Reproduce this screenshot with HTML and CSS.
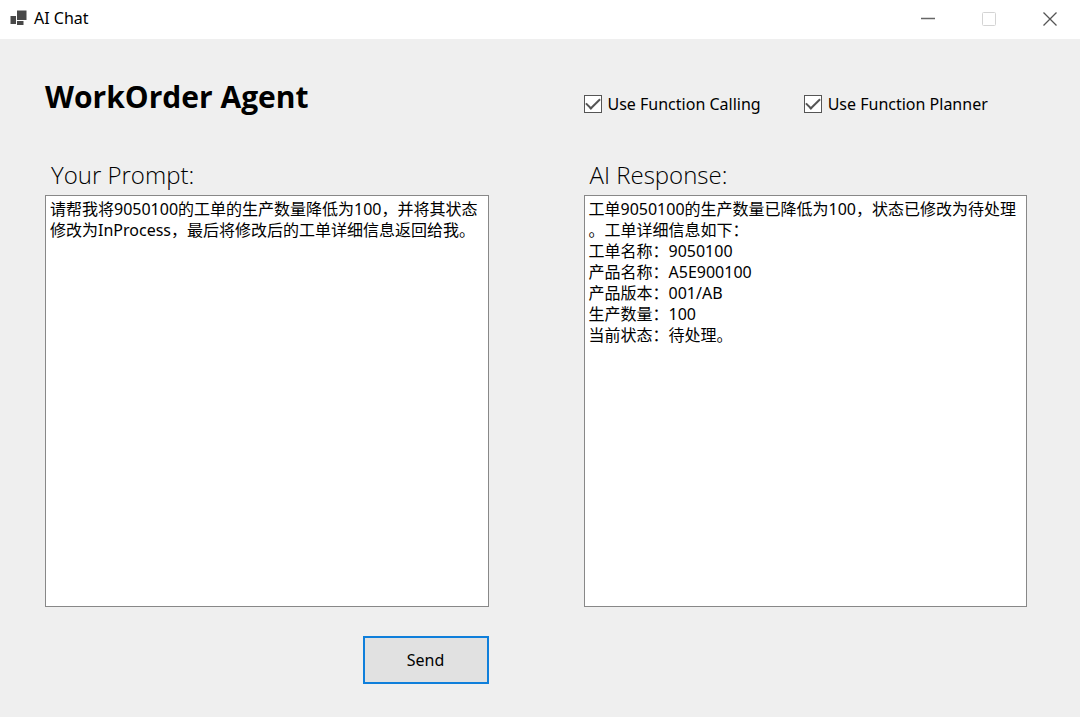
FILE: index.html
```html
<!DOCTYPE html>
<html lang="zh-CN">
<head>
<meta charset="utf-8">
<meta name="viewport" content="width=device-width, initial-scale=1">
<title>AI Chat</title>
<link rel="stylesheet" href="styles.css">
</head>
<body>
<header class="titlebar">
  <svg class="app-icon" width="18" height="18" viewBox="0 0 18 18" aria-hidden="true">
    <path fill="#484848" d="M8 .5h9.5V10H8zM1.5 6H7v8H1.5zM8 11h6.5v4H8z"/>
  </svg>
  <span class="app-name">AI Chat</span>
  <div class="window-controls">
    <button class="window-button" type="button" aria-label="Minimize">
      <svg width="14" height="14" viewBox="0 0 14 14"><path d="M0 6.5h14" stroke="#666" stroke-width="1.5"/></svg>
    </button>
    <button class="window-button" type="button" aria-label="Maximize" disabled>
      <svg width="14" height="14" viewBox="0 0 14 14"><rect x=".5" y=".5" width="13" height="13" rx="1" fill="none" stroke="#d4d4d4"/></svg>
    </button>
    <button class="window-button" type="button" aria-label="Close">
      <svg width="14" height="14" viewBox="0 0 14 14"><path d="M.5.5l13 13M13.5.5l-13 13" stroke="#555" stroke-width="1.3"/></svg>
    </button>
  </div>
</header>
<main class="form">
  <div class="top">
    <h1 class="heading">WorkOrder Agent</h1>
    <div class="options">
      <label class="option"><input class="check" type="checkbox" checked>Use Function Calling</label>
      <label class="option"><input class="check" type="checkbox" checked>Use Function Planner</label>
    </div>
  </div>
  <div class="panels">
    <section class="panel">
      <label class="panel-label" for="prompt">Your Prompt:</label>
      <textarea class="panel-text" id="prompt" spellcheck="false">请帮我将9050100的工单的生产数量降低为100，并将其状态
修改为InProcess，最后将修改后的工单详细信息返回给我。</textarea>
    </section>
    <section class="panel">
      <label class="panel-label" for="response">AI Response:</label>
      <textarea class="panel-text" id="response" spellcheck="false">工单9050100的生产数量已降低为100，状态已修改为待处理
。工单详细信息如下：
工单名称：9050100
产品名称：A5E900100
产品版本：001/AB
生产数量：100
当前状态：待处理。</textarea>
    </section>
  </div>
  <div class="actions">
    <button class="send" type="button">Send</button>
  </div>
</main>
</body>
</html>
```
FILE: styles.css
```css
* {
  box-sizing: border-box;
}

body {
  display: flex;
  flex-direction: column;
  min-height: 100vh;
  margin: 0;
  background: #efefef;
  color: #000;
  font: 16px/21px "Noto Sans", "Noto Sans CJK SC", sans-serif;
}

.titlebar {
  display: flex;
  align-items: center;
  height: 39px;
  padding: 0 0 2px 9px;
  background: #fff;
}

.app-icon {
  margin-right: 7px;
}

.window-controls {
  display: flex;
  align-self: stretch;
  margin-left: auto;
}

.window-button {
  display: grid;
  place-items: center;
  width: 61px;
  padding: 0;
  border: 0;
  background: transparent;
}

.form {
  display: flex;
  flex: 1;
  flex-direction: column;
  padding: 36px 53px 33px 45px;
}

.top,
.panels,
.actions {
  display: grid;
  grid-template-columns: 1fr 1fr;
  column-gap: 95px;
}

.top {
  align-items: center;
  margin-bottom: 38px;
}

.heading {
  margin: 0;
  font-family: "Open Sans", sans-serif;
  font-size: 30px;
  line-height: 44px;
  white-space: nowrap;
}

.options {
  display: flex;
  gap: 43px;
  padding-top: 14px;
}

.option {
  display: flex;
  align-items: center;
  gap: 6px;
  white-space: nowrap;
}

.check {
  display: grid;
  flex: none;
  place-items: center;
  width: 18px;
  height: 18px;
  margin: 0;
  border: 1px solid #555;
  background: #fff;
  appearance: none;
}

.check:checked::before {
  content: "";
  width: 12px;
  height: 6px;
  margin-bottom: 4px;
  border: solid #555;
  border-width: 0 0 2px 2px;
  transform: rotate(-45deg);
}

.panels {
  flex: 1;
}

.panel {
  display: flex;
  flex-direction: column;
}

.panel-label {
  padding: 0 6px 2px;
  font-family: "Open Sans", sans-serif;
  font-size: 24px;
  font-weight: 300;
  line-height: 36px;
}

.panel-text {
  flex: 1;
  width: 100%;
  padding: 3px 4px;
  border: 1px solid #888;
  border-radius: 0;
  outline: 0;
  background: #fff;
  color: inherit;
  font: inherit;
  resize: none;
}

.actions {
  margin-top: 29px;
}

.send {
  justify-self: end;
  width: 126px;
  height: 48px;
  border: 2px solid #0f7fdb;
  background: #e1e1e1;
  color: inherit;
  font: inherit;
}
```
